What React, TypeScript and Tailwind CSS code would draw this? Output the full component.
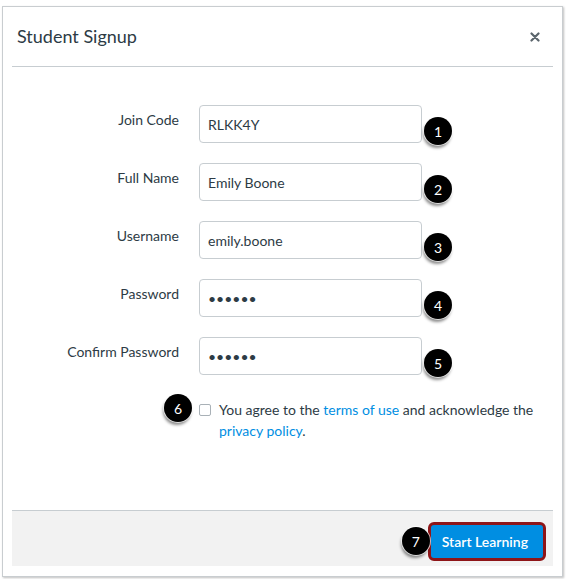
import React from 'react';

const ink = 'text-[#2d3b45]';

function Marker({ n, className = '' }: { n: number; className?: string }) {
  return (
    <div
      className={`flex h-[28px] w-[28px] shrink-0 items-center justify-center rounded-full bg-black text-[14px] text-white shadow-[-1px_3px_3px_rgba(0,0,0,0.45)] ring-1 ring-white/70 ${className}`}
    >
      {n}
    </div>
  );
}

interface FieldRowProps {
  label: string;
  value: string;
  n: number;
  password?: boolean;
}

function FieldRow({ label, value, n, password }: FieldRowProps) {
  return (
    <div className="flex h-[38px] items-start">
      <label className={`w-[167px] pt-[5px] text-right text-[14px] leading-[20px] ${ink}`}>{label}</label>
      <input
        readOnly
        type={password ? 'password' : 'text'}
        value={value}
        className={`ml-[20px] h-[38px] w-[223px] rounded-[4px] border border-[#c7cdd1] bg-white px-[8px] text-[14px] ${ink} outline-none`}
      />
      <Marker n={n} className="ml-[2px] mt-[12px]" />
    </div>
  );
}

export default function App() {
  return (
    <div className="h-[579px] w-[567px] bg-white pl-[2px] pt-[6px] font-['Lato',sans-serif]">
      <div className="flex h-[571px] w-[561px] flex-col border border-[#c9cdd0] bg-white px-[9px] pb-[10px] shadow-[1px_1px_2px_rgba(0,0,0,0.25)]">
        <div className="flex h-[60px] shrink-0 items-center justify-between border-b border-[#c7cdd1] pl-[5px] pr-[13px]">
          <h2 className={`text-[18px] ${ink}`}>Student Signup</h2>
          <svg width="10" height="10" viewBox="0 0 10 10" className="mt-[1px]">
            <path d="M1.5 1.5 L8.5 8.5 M8.5 1.5 L1.5 8.5" stroke="#5b656c" strokeWidth="2.2" strokeLinecap="round" />
          </svg>
        </div>

        <div className="flex flex-1 flex-col pt-[38px]">
          <div className="flex flex-col gap-[20px]">
            <FieldRow label="Join Code" value="RLKK4Y" n={1} />
            <FieldRow label="Full Name" value="Emily Boone" n={2} />
            <FieldRow label="Username" value="emily.boone" n={3} />
            <FieldRow label="Password" value="secret" n={4} password />
            <FieldRow label="Confirm Password" value="secret" n={5} password />
          </div>

          <div className="mt-[19px] flex items-start">
            <div className="flex w-[187px] shrink-0 justify-end pr-[7px]">
              <Marker n={6} />
            </div>
            <div className="mt-[10px] h-[12px] w-[12px] shrink-0 rounded-[2px] border border-[#a9b1b7] bg-white" />
            <p className={`ml-[8px] mt-[5px] w-[322px] text-[14px] leading-[21px] ${ink}`}>
              You agree to the <span className="text-[#008ee2]">terms of use</span> and acknowledge the{' '}
              <span className="text-[#008ee2]">privacy policy</span>.
            </p>
          </div>
        </div>

        <div className="flex h-[56px] shrink-0 items-start justify-end border-t border-[#c7cdd1] bg-[#f2f2f2] pr-[7px] pt-[11px]">
          <Marker n={7} className="relative z-10 -mr-[2px] mt-[5px]" />
          <button className="h-[39px] rounded-[6px] border-[3px] border-[#8e1518] bg-[#008ee2] pl-[11px] pr-[15px] text-[14px] font-semibold text-white">
            Start Learning
          </button>
        </div>
      </div>
    </div>
  );
}
